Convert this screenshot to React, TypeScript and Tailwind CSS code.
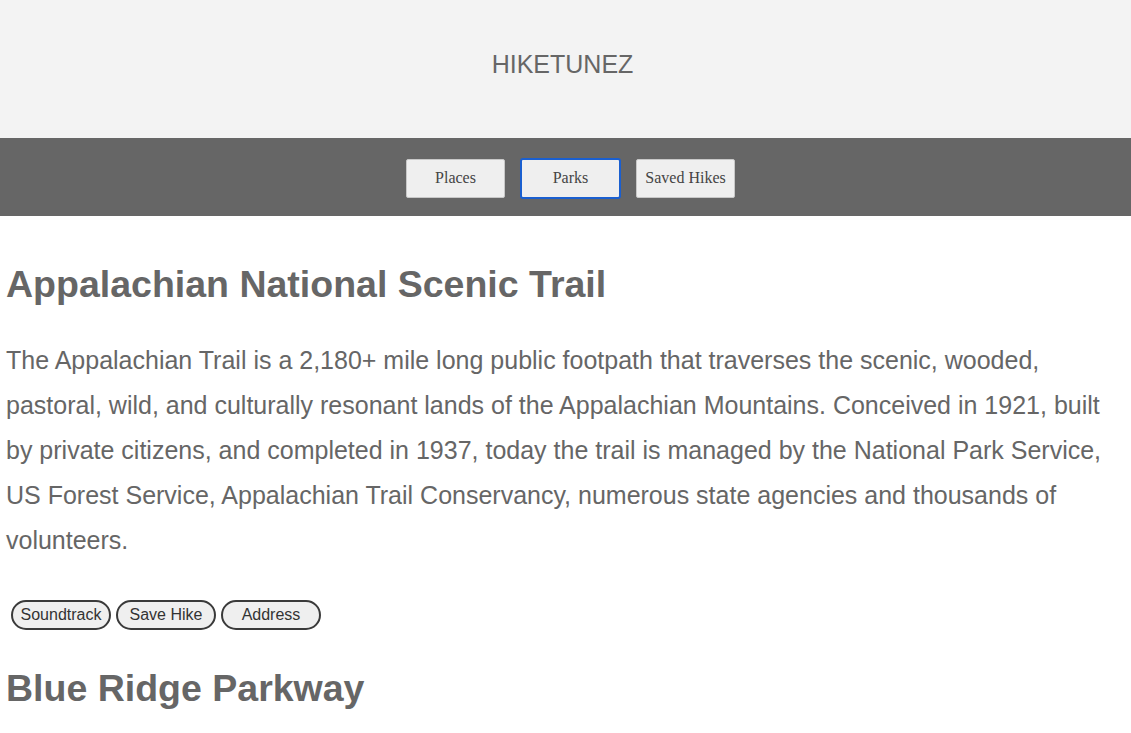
import React from "react";

export default function App() {
  const serif = { fontFamily: '"Liberation Serif", "Times New Roman", serif' };
  const navBtn =
    "w-[99px] h-[39px] bg-[#efefef] text-[#444] text-[16px] border border-[#c8c8c8] rounded-[2px] flex items-center justify-center";
  const pill =
    "w-[100px] h-[30px] bg-[#efefef] text-[#333] text-[16px] border-2 border-[#3a3a3a] rounded-full flex items-center justify-center";
  return (
    <div className="min-h-[733px] bg-white" style={{ fontFamily: '"Liberation Sans", Arial, sans-serif' }}>
      <header className="h-[138px] bg-[#f3f3f3] flex items-center justify-center pr-[6px]">
        <div className="text-[25px] text-[#666] mt-[-8px]">HIKETUNEZ</div>
      </header>
      <nav className="h-[78px] bg-[#666666] flex items-center justify-center gap-[15px] pl-[10px] pt-[2px]">
        <button className={navBtn} style={serif}>Places</button>
        <button
          className="w-[101px] h-[41px] bg-[#efefef] text-[#444] text-[16px] border-2 border-[#1a5fd0] rounded-[3px] flex items-center justify-center"
          style={serif}
        >
          Parks
        </button>
        <button className={navBtn} style={serif}>Saved Hikes</button>
      </nav>
      <main className="px-[6px] text-[#666]">
        <h1 className="text-[37.5px] font-bold leading-[44px] mt-[46px]">Appalachian National Scenic Trail</h1>
        <p className="text-[25px] leading-[45px] mt-[32px] pr-[12px]">
          The Appalachian Trail is a 2,180+ mile long public footpath that traverses the scenic, wooded, pastoral, wild,
          and culturally resonant lands of the Appalachian Mountains. Conceived in 1921, built by private citizens, and
          completed in 1937, today the trail is managed by the National Park Service, US Forest Service, Appalachian
          Trail Conservancy, numerous state agencies and thousands of volunteers.
        </p>
        <div className="flex gap-[5px] ml-[5px] mt-[37px]">
          <button className={pill}>Soundtrack</button>
          <button className={pill}>Save Hike</button>
          <button className={pill}>Address</button>
        </div>
        <h1 className="text-[37.5px] font-bold leading-[44px] mt-[36px]">Blue Ridge Parkway</h1>
      </main>
    </div>
  );
}
